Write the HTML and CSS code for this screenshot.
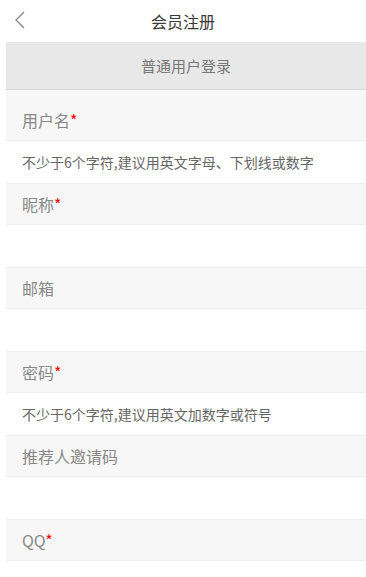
FILE: index.html
```html
<!DOCTYPE html>
<html lang="zh-CN">
<head>
<meta charset="utf-8">
<title>会员注册</title>
<link rel="stylesheet" href="styles.css">
</head>
<body>
<header class="topbar">
  <span class="back">
    <svg width="12" height="20" viewBox="0 0 12 20"><path d="M10 2 L2 10 L10 18" fill="none" stroke="#8a8a8a" stroke-width="1.4"/></svg>
  </span>
  <h1 class="title">会员注册</h1>
</header>
<div class="tab">普通用户登录</div>
<form class="form">
  <div class="field first">用户名<span class="req">*</span></div>
  <div class="hint">不少于6个字符,建议用英文字母、下划线或数字</div>
  <div class="field">昵称<span class="req">*</span></div>
  <div class="hint"></div>
  <div class="field">邮箱</div>
  <div class="hint"></div>
  <div class="field">密码<span class="req">*</span></div>
  <div class="hint">不少于6个字符,建议用英文加数字或符号</div>
  <div class="field">推荐人邀请码</div>
  <div class="hint"></div>
  <div class="field">QQ<span class="req">*</span></div>
  <div class="hint"></div>
</form>
</body>
</html>
```
FILE: styles.css
```css
html, body {
  margin: 0;
  padding: 0;
  background: #fff;
  font-family: "Noto Sans CJK SC", "Noto Sans", sans-serif;
}
.topbar {
  position: relative;
  height: 42px;
  display: flex;
  align-items: center;
  justify-content: center;
}
.back {
  position: absolute;
  left: 14px;
  top: 10px;
  width: 12px;
  height: 20px;
}
.back svg { display: block; }
.title {
  margin: 0;
  font-size: 16px;
  font-weight: normal;
  color: #3a3a3a;
  line-height: 20px;
}
.tab {
  margin-left: 6px;
  height: 47px;
  line-height: 47px;
  background: #e8e8e8;
  border-bottom: 1px solid #d6d6d6;
  text-align: center;
  font-size: 15px;
  color: #777;
}
.form {
  margin: 0 0 0 6px;
  display: flex;
  flex-direction: column;
}
.field {
  height: 40px;
  line-height: 40px;
  padding-left: 16px;
  background: #f7f7f7;
  border-bottom: 1px solid #efefef;
  font-size: 16px;
  color: #888;
}
.field.first {
  padding-top: 10px;
}
.req {
  color: #f00;
}
.hint {
  height: 42px;
  line-height: 42px;
  padding-left: 16px;
  border-bottom: 1px solid #efefef;
  font-size: 14px;
  color: #666;
  white-space: nowrap;
}
```
